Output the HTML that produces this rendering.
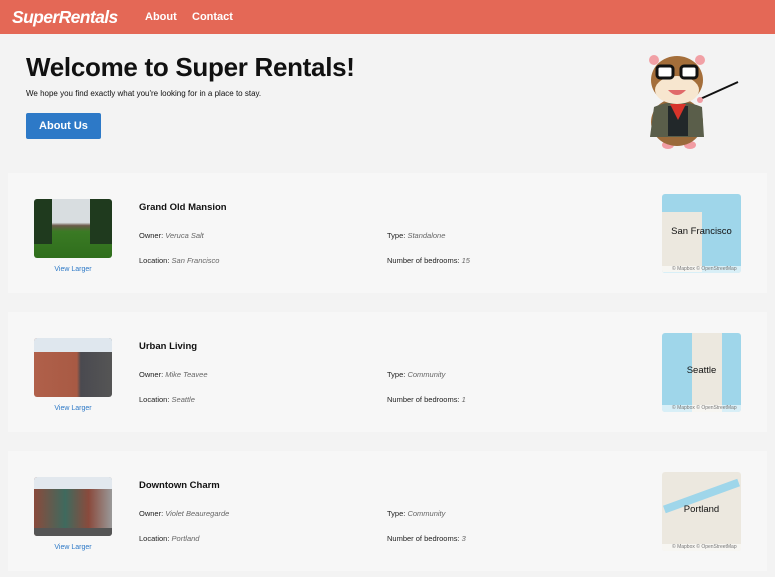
<!DOCTYPE html>
<html><head><style>
*{margin:0;padding:0;box-sizing:border-box}
body{width:775px;height:577px;background:#f3f3f3;font-family:"Liberation Sans",sans-serif;overflow:hidden;position:relative;color:#111}
.nav{height:34px;background:#e46856;position:relative}
.nav .logo{position:absolute;left:12px;top:7px;color:#fff;font-size:17.5px;font-weight:bold;font-style:italic;letter-spacing:-0.6px}
.nav a{position:absolute;top:11px;color:#fff;font-weight:bold;font-size:11px}
h1{position:absolute;left:26px;top:52px;font-size:26px;font-weight:bold;letter-spacing:-0.3px}
.sub{position:absolute;left:26px;top:89px;font-size:8px}
.btn{position:absolute;left:26px;top:113px;width:75px;height:26px;background:#2d79c7;color:#fff;font-weight:bold;font-size:11px;text-align:center;line-height:26px;border-radius:2px}
.card{position:absolute;left:8px;width:759px;height:120px;background:#f7f7f7}
.ph{position:absolute;left:26px;top:26px;width:78px;height:59px;border-radius:3px;overflow:hidden}
.vl{position:absolute;left:26px;width:78px;top:93px;text-align:center;font-size:7px;color:#2d79c7}
.t{position:absolute;left:131px;top:29px;font-size:9.5px;font-weight:bold}
.f{position:absolute;font-size:7.5px;color:#222}
.f i{color:#666}
.map{position:absolute;left:654px;top:21px;width:79px;height:79px;border-radius:3px;overflow:hidden;background:#9fd6ea}
.map span{position:absolute;left:0;width:100%;top:32px;text-align:center;font-size:9.5px;color:#111}
.map b{position:absolute;bottom:0;left:0;width:100%;height:7px;background:rgba(255,255,255,.6);font-size:5px;font-weight:normal;color:#777;padding-left:10px}
</style></head><body>
<div class="nav"><div class="logo">SuperRentals</div><a style="left:145px">About</a><a style="left:192px">Contact</a></div>
<h1>Welcome to Super Rentals!</h1>
<div class="sub">We hope you find exactly what you're looking for in a place to stay.</div>
<div class="btn">About Us</div>
<svg style="position:absolute;left:640px;top:42px" width="100" height="110" viewBox="0 0 100 110">
<line x1="58" y1="58" x2="98" y2="40" stroke="#111" stroke-width="2"/>
<ellipse cx="28" cy="103" rx="6" ry="4" fill="#f19ca3"/><ellipse cx="50" cy="103" rx="6" ry="4" fill="#f19ca3"/>
<ellipse cx="37" cy="80" rx="26" ry="24" fill="#9a6a3a"/>
<path d="M14 65 Q37 55 62 65 L64 95 L10 95 Z" fill="#5a5e4a"/>
<rect x="28" y="64" width="20" height="30" fill="#22282a"/>
<path d="M30 62 L46 62 L38 78 Z" fill="#d8342a"/>
<ellipse cx="37" cy="38" rx="26" ry="24" fill="#a46e3a"/>
<ellipse cx="37" cy="48" rx="22" ry="14" fill="#f7e6cf"/>
<circle cx="14" cy="18" r="5" fill="#f1a0a5"/><circle cx="60" cy="18" r="5" fill="#f1a0a5"/>
<rect x="17" y="24" width="16" height="12" rx="3" fill="#fff" stroke="#111" stroke-width="3"/>
<rect x="41" y="24" width="16" height="12" rx="3" fill="#fff" stroke="#111" stroke-width="3"/>
<path d="M28 48 Q37 58 46 48 Z" fill="#e06a6a"/>
<circle cx="60" cy="58" r="3" fill="#f19ca3"/>
</svg>

<div class="card" style="top:173px">
<div class="ph" style="background:linear-gradient(#d8dde0 0,#d8dde0 40%,#6b5a4a 45%,#3a7a24 55%,#2f6e1c 100%)"><div style="position:absolute;left:0;top:0;width:18px;height:45px;background:#1f3a1e"></div><div style="position:absolute;right:0;top:0;width:22px;height:45px;background:#1f3a1e"></div></div>
<div class="vl">View Larger</div>
<div class="t">Grand Old Mansion</div>
<div class="f" style="left:131px;top:58px">Owner: <i>Veruca Salt</i></div>
<div class="f" style="left:379px;top:58px">Type: <i>Standalone</i></div>
<div class="f" style="left:131px;top:83px">Location: <i>San Francisco</i></div>
<div class="f" style="left:379px;top:83px">Number of bedrooms: <i>15</i></div>
<div class="map"><div style="position:absolute;left:0;top:18px;width:40px;height:60px;background:#ece8df"></div><span>San Francisco</span><b>© Mapbox © OpenStreetMap</b></div>
</div>

<div class="card" style="top:312px">
<div class="ph" style="background:linear-gradient(90deg,#b0604a 0,#a85a44 55%,#4a4a50 60%,#555 100%)"><div style="position:absolute;left:0;top:0;width:100%;height:14px;background:#dfe7ee"></div></div>
<div class="vl">View Larger</div>
<div class="t">Urban Living</div>
<div class="f" style="left:131px;top:58px">Owner: <i>Mike Teavee</i></div>
<div class="f" style="left:379px;top:58px">Type: <i>Community</i></div>
<div class="f" style="left:131px;top:83px">Location: <i>Seattle</i></div>
<div class="f" style="left:379px;top:83px">Number of bedrooms: <i>1</i></div>
<div class="map"><div style="position:absolute;left:30px;top:0;width:30px;height:79px;background:#ece8df"></div><span>Seattle</span><b>© Mapbox © OpenStreetMap</b></div>
</div>

<div class="card" style="top:451px">
<div class="ph" style="background:linear-gradient(90deg,#8a4a3c 0,#3f6a5e 40%,#8a4a3c 70%,#999 100%)"><div style="position:absolute;left:0;top:0;width:100%;height:12px;background:#e2e8ee"></div><div style="position:absolute;left:0;bottom:0;width:100%;height:8px;background:#555"></div></div>
<div class="vl">View Larger</div>
<div class="t">Downtown Charm</div>
<div class="f" style="left:131px;top:58px">Owner: <i>Violet Beauregarde</i></div>
<div class="f" style="left:379px;top:58px">Type: <i>Community</i></div>
<div class="f" style="left:131px;top:83px">Location: <i>Portland</i></div>
<div class="f" style="left:379px;top:83px">Number of bedrooms: <i>3</i></div>
<div class="map" style="background:#ece8df"><div style="position:absolute;left:0;top:20px;width:79px;height:8px;background:#9fd6ea;transform:rotate(-20deg)"></div><span>Portland</span><b>© Mapbox © OpenStreetMap</b></div>
</div>
</body></html>
